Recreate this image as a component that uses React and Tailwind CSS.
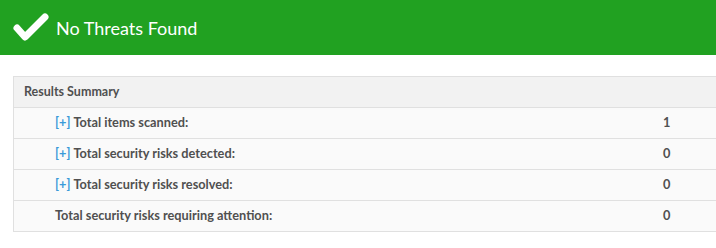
const rows = [
  { label: 'Total items scanned:', value: '1', expand: true },
  { label: 'Total security risks detected:', value: '0', expand: true },
  { label: 'Total security risks resolved:', value: '0', expand: true },
  { label: 'Total security risks requiring attention:', value: '0', expand: false },
]

export default function App() {
  return (
    <div className="w-[716px] h-[248px] bg-white overflow-hidden font-['Lato',sans-serif]">
      {/* Status banner */}
      <div className="h-[55px] bg-[#21a121] flex items-center pl-[12px]">
        <svg width="38" height="34" viewBox="0 0 38 34" className="shrink-0">
          <path d="M5 17 L13 26 L33 6" fill="none" stroke="#fff" strokeWidth="7" strokeLinecap="round" strokeLinejoin="round" />
        </svg>
        <span className="ml-[6px] text-white text-[18px] leading-none">No Threats Found</span>
      </div>

      {/* Summary table */}
      <div className="mt-[21px] ml-[13px] border-l border-t border-[#e0e0e0]">
        <div className="h-[31px] bg-[#f2f2f2] border-b border-[#e0e0e0] flex items-center pl-[10px] text-[12.5px] font-bold text-[#505050]">
          Results Summary
        </div>
        {rows.map((r) => (
          <div key={r.label} className="h-[31px] bg-[#fafafa] border-b border-[#e0e0e0] flex items-center text-[12.75px] font-bold text-[#505050]">
            <div className="w-[649px] pl-[41px]">
              {r.expand && <span className="text-[#3a9ad9] mr-[3px]">[+]</span>}
              {r.label}
            </div>
            <div>{r.value}</div>
          </div>
        ))}
      </div>
    </div>
  )
}
